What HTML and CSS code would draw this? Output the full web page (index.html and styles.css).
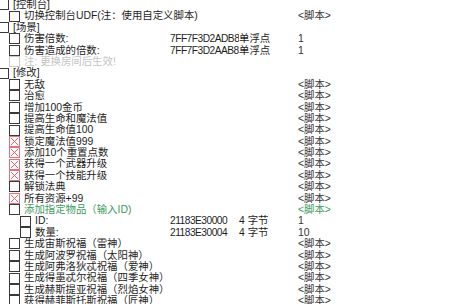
FILE: index.html
```html
<!DOCTYPE html>
<html lang="zh-CN">
<head>
    <meta charset="UTF-8">
    <title>Cheat Table</title>
    <link rel="stylesheet" href="styles.css">
</head>
<body>
    <div class="table">
        <div class="row lv0"><div class="desc"><span class="box"></span>[控制台]</div><div></div><div></div><div></div></div>
        <div class="row lv1"><div class="desc"><span class="box"></span>切换控制台UDF(注：使用自定义脚本)</div><div></div><div></div><div class="val">&lt;脚本&gt;</div></div>
        <div class="row lv0"><div class="desc"><span class="box"></span>[场景]</div><div></div><div></div><div></div></div>
        <div class="row lv1"><div class="desc"><span class="box"></span>伤害倍数:</div><div class="addr">7FF7F3D2ADB8</div><div>单浮点</div><div class="val">1</div></div>
        <div class="row lv1"><div class="desc"><span class="box"></span>伤害造成的倍数:</div><div class="addr">7FF7F3D2AAB8</div><div>单浮点</div><div class="val">1</div></div>
        <div class="row lv1 muted"><div class="desc"><span class="box"></span>注: 更换房间后生效!</div><div></div><div></div><div></div></div>
        <div class="row lv0"><div class="desc"><span class="box"></span>[修改]</div><div></div><div></div><div></div></div>
        <div class="row lv1"><div class="desc"><span class="box"></span>无敌</div><div></div><div></div><div class="val">&lt;脚本&gt;</div></div>
        <div class="row lv1"><div class="desc"><span class="box"></span>治愈</div><div></div><div></div><div class="val">&lt;脚本&gt;</div></div>
        <div class="row lv1"><div class="desc"><span class="box"></span>增加100金币</div><div></div><div></div><div class="val">&lt;脚本&gt;</div></div>
        <div class="row lv1"><div class="desc"><span class="box"></span>提高生命和魔法值</div><div></div><div></div><div class="val">&lt;脚本&gt;</div></div>
        <div class="row lv1"><div class="desc"><span class="box"></span>提高生命值100</div><div></div><div></div><div class="val">&lt;脚本&gt;</div></div>
        <div class="row lv1"><div class="desc"><span class="box on"><svg viewBox="0 0 10 10"><path d="M1 1L9 9M9 1L1 9"/></svg></span>锁定魔法值999</div><div></div><div></div><div class="val">&lt;脚本&gt;</div></div>
        <div class="row lv1"><div class="desc"><span class="box on"><svg viewBox="0 0 10 10"><path d="M1 1L9 9M9 1L1 9"/></svg></span>添加10个重置点数</div><div></div><div></div><div class="val">&lt;脚本&gt;</div></div>
        <div class="row lv1"><div class="desc"><span class="box on"><svg viewBox="0 0 10 10"><path d="M1 1L9 9M9 1L1 9"/></svg></span>获得一个武器升级</div><div></div><div></div><div class="val">&lt;脚本&gt;</div></div>
        <div class="row lv1"><div class="desc"><span class="box on"><svg viewBox="0 0 10 10"><path d="M1 1L9 9M9 1L1 9"/></svg></span>获得一个技能升级</div><div></div><div></div><div class="val">&lt;脚本&gt;</div></div>
        <div class="row lv1"><div class="desc"><span class="box"></span>解锁法典</div><div></div><div></div><div class="val">&lt;脚本&gt;</div></div>
        <div class="row lv1"><div class="desc"><span class="box on"><svg viewBox="0 0 10 10"><path d="M1 1L9 9M9 1L1 9"/></svg></span>所有资源+99</div><div></div><div></div><div class="val">&lt;脚本&gt;</div></div>
        <div class="row lv1 green"><div class="desc"><span class="box"></span>添加指定物品（输入ID)</div><div></div><div></div><div class="val">&lt;脚本&gt;</div></div>
        <div class="row lv2"><div class="desc"><span class="box"></span>ID:</div><div class="addr">21183E30000</div><div>4 字节</div><div class="val">1</div></div>
        <div class="row lv2"><div class="desc"><span class="box"></span>数量:</div><div class="addr">21183E30004</div><div>4 字节</div><div class="val">10</div></div>
        <div class="row lv1"><div class="desc"><span class="box"></span>生成宙斯祝福（雷神）</div><div></div><div></div><div class="val">&lt;脚本&gt;</div></div>
        <div class="row lv1"><div class="desc"><span class="box"></span>生成阿波罗祝福（太阳神）</div><div></div><div></div><div class="val">&lt;脚本&gt;</div></div>
        <div class="row lv1"><div class="desc"><span class="box"></span>生成阿弗洛狄忒祝福（爱神）</div><div></div><div></div><div class="val">&lt;脚本&gt;</div></div>
        <div class="row lv1"><div class="desc"><span class="box"></span>生成得墨忒尔祝福（四季女神）</div><div></div><div></div><div class="val">&lt;脚本&gt;</div></div>
        <div class="row lv1"><div class="desc"><span class="box"></span>生成赫斯提亚祝福（烈焰女神）</div><div></div><div></div><div class="val">&lt;脚本&gt;</div></div>
        <div class="row lv1"><div class="desc"><span class="box"></span>获得赫菲斯托斯祝福（匠神）</div><div></div><div></div><div class="val">&lt;脚本&gt;</div></div>
    </div>
</body>
</html>
```

FILE: styles.css
```css
/* Table de triche */
body {
    margin: 0;
    background: #fff;
    color: #1e1e1e;
    font-family: 'Liberation Sans', 'Noto Sans CJK SC', sans-serif;
    font-size: 10.4px;
    overflow: hidden;
}

.table {
    margin-top: -1px;
}

.row {
    display: grid;
    grid-template-columns: 170px 69px 59px 1fr;
    height: 11.4px;
    line-height: 11.4px;
    white-space: nowrap;
}

.desc {
    display: flex;
    align-items: center;
}

.lv0 .desc { margin-left: -2px; }
.lv1 .desc { padding-left: 9px; }
.lv2 .desc { padding-left: 20px; }

.box {
    box-sizing: border-box;
    width: 11px;
    height: 11px;
    border: 1px solid #3a3a3a;
    background: #fff;
    margin-right: 4px;
    flex: none;
    display: flex;
}

.box svg {
    width: 100%;
    height: 100%;
    stroke: #e0505a;
    stroke-width: 1;
}

.box.on {
    border-color: #e6707a;
}

/* Colonne adresse : un peu resserrée */
.addr {
    font-size: 10.2px;
    letter-spacing: -0.5px;
    overflow: hidden;
}

.val {
    color: #333;
}

/* Lignes grisées et vertes */
.muted {
    color: #c4c4c4;
}

.muted .box {
    border-color: #c8c8c8;
}

.green,
.green .val {
    color: #3d9a5c;
}
```
